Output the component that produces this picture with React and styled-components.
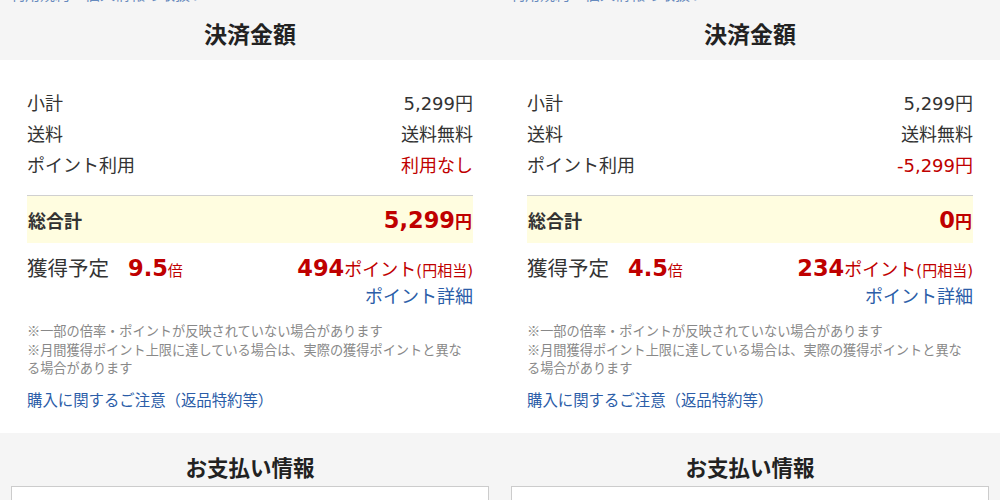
import React from "react";
import styled, { createGlobalStyle } from "styled-components";

const GlobalStyle = createGlobalStyle`
    html, body {
        margin: 0;
        padding: 0;
        background: #f5f5f5;
        overflow: hidden;
    }
    body {
        font-family: "DejaVu Sans", "Noto Sans CJK JP", sans-serif;
        color: #333;
    }
`;

const panels = [
    { usage: "利用なし", total: "5,299", rate: "9.5", points: "494" },
    { usage: "-5,299円", total: "0", rate: "4.5", points: "234" },
];

function Panel({ data }) {
    return (
        <PanelHTML>
            <Header>
                <TopLink>利用規約・個人情報の取扱い</TopLink>
                <Title>決済金額</Title>
            </Header>
            <Summary>
                <Row>
                    <span>小計</span>
                    <span>5,299円</span>
                </Row>
                <Row>
                    <span>送料</span>
                    <span>送料無料</span>
                </Row>
                <Row>
                    <span>ポイント利用</span>
                    <RedText>{data.usage}</RedText>
                </Row>
                <TotalBand>
                    <TotalLabel>総合計</TotalLabel>
                    <Amount>
                        <BigNum>{data.total}</BigNum>
                        <Unit>円</Unit>
                    </Amount>
                </TotalBand>
                <EarnRow>
                    <EarnLeft>
                        <EarnLabel>獲得予定</EarnLabel>
                        <span>
                            <BigNum>{data.rate}</BigNum>
                            <SmallRed>倍</SmallRed>
                        </span>
                    </EarnLeft>
                    <Amount>
                        <BigNum>{data.points}</BigNum>
                        <PointText>ポイント</PointText>
                        <SmallRed>(円相当)</SmallRed>
                    </Amount>
                </EarnRow>
                <DetailLink>ポイント詳細</DetailLink>
                <Notes>
                    <p>※一部の倍率・ポイントが反映されていない場合があります</p>
                    <p>※月間獲得ポイント上限に達している場合は、実際の獲得ポイントと異なる場合があります</p>
                </Notes>
                <NoticeLink>購入に関するご注意（返品特約等）</NoticeLink>
            </Summary>
            <PaySection>
                <SubTitle>お支払い情報</SubTitle>
                <PayBox />
            </PaySection>
        </PanelHTML>
    );
}

export default function App() {
    return (
        <>
            <GlobalStyle />
            <Page>
                {panels.map((p, i) => (
                    <Panel key={i} data={p} />
                ))}
            </Page>
        </>
    );
}

const Page = styled.div`
    display: flex;
    width: 1000px;
`;

const PanelHTML = styled.section`
    width: 500px;
    display: flex;
    flex-direction: column;
`;

const Header = styled.header`
    height: 60px;
    overflow: hidden;
    background: #f5f5f5;
`;

const TopLink = styled.div`
    margin-top: -14px;
    padding-left: 10px;
    font-family: "Noto Sans CJK JP", sans-serif;
    font-size: 15px;
    line-height: 16px;
    color: #2b5da8;
    opacity: 0.7;
`;

const Title = styled.h2`
    margin: 16px 0 0;
    text-align: center;
    font-family: "Noto Sans CJK JP", sans-serif;
    font-size: 23px;
    font-weight: 700;
    line-height: 30px;
    color: #222;
`;

const Summary = styled.div`
    background: #fff;
    padding: 28px 27px 23px;
`;

const Row = styled.div`
    display: flex;
    justify-content: space-between;
    font-size: 18px;
    line-height: 31px;
    color: #333;
`;

const RedText = styled.span`
    color: #bf0000;
`;

const TotalBand = styled.div`
    display: flex;
    justify-content: space-between;
    align-items: center;
    margin-top: 14px;
    border-top: 1px solid #d0d0d0;
    background: #fffde0;
    height: 47px;
    padding: 0 1px;
`;

const TotalLabel = styled.span`
    font-family: "Noto Sans CJK JP", sans-serif;
    font-size: 18px;
    font-weight: 700;
    color: #333;
`;

const Amount = styled.span`
    color: #bf0000;
    white-space: nowrap;
`;

const BigNum = styled.span`
    font-size: 22.5px;
    font-weight: 700;
    color: #bf0000;
`;

const Unit = styled.span`
    font-family: "Noto Sans CJK JP", sans-serif;
    font-size: 17px;
    font-weight: 700;
`;

const EarnRow = styled.div`
    display: flex;
    justify-content: space-between;
    align-items: baseline;
    padding-top: 10px;
    height: 28px;
    line-height: 28px;
`;

const EarnLeft = styled.div`
    display: flex;
    align-items: baseline;
    gap: 19px;
`;

const EarnLabel = styled.span`
    font-family: "Noto Sans CJK JP", sans-serif;
    font-size: 20.5px;
    color: #333;
`;

const SmallRed = styled.span`
    font-size: 15px;
    color: #bf0000;
`;

const PointText = styled.span`
    font-family: "Noto Sans CJK JP", sans-serif;
    font-size: 18px;
    color: #bf0000;
`;

const DetailLink = styled.div`
    text-align: right;
    font-family: "Noto Sans CJK JP", sans-serif;
    font-size: 18px;
    height: 28px;
    line-height: 28px;
    color: #2b5da8;
`;

const Notes = styled.div`
    margin-top: 13px;
    font-family: "Noto Sans CJK JP", sans-serif;
    font-size: 13.2px;
    line-height: 18.5px;
    color: #888;
    p {
        margin: 0;
    }
`;

const NoticeLink = styled.div`
    margin-top: 10px;
    font-family: "Noto Sans CJK JP", sans-serif;
    font-size: 15.4px;
    height: 22px;
    line-height: 22px;
    color: #2b5da8;
`;

const PaySection = styled.div`
    background: #f5f5f5;
    padding: 19px 11px 0;
`;

const SubTitle = styled.h3`
    margin: 0;
    text-align: center;
    font-family: "Noto Sans CJK JP", sans-serif;
    font-size: 21.5px;
    font-weight: 700;
    line-height: 30px;
    color: #222;
`;

const PayBox = styled.div`
    margin-top: 4px;
    height: 60px;
    background: #fff;
    border: 1px solid #ccc;
`;
